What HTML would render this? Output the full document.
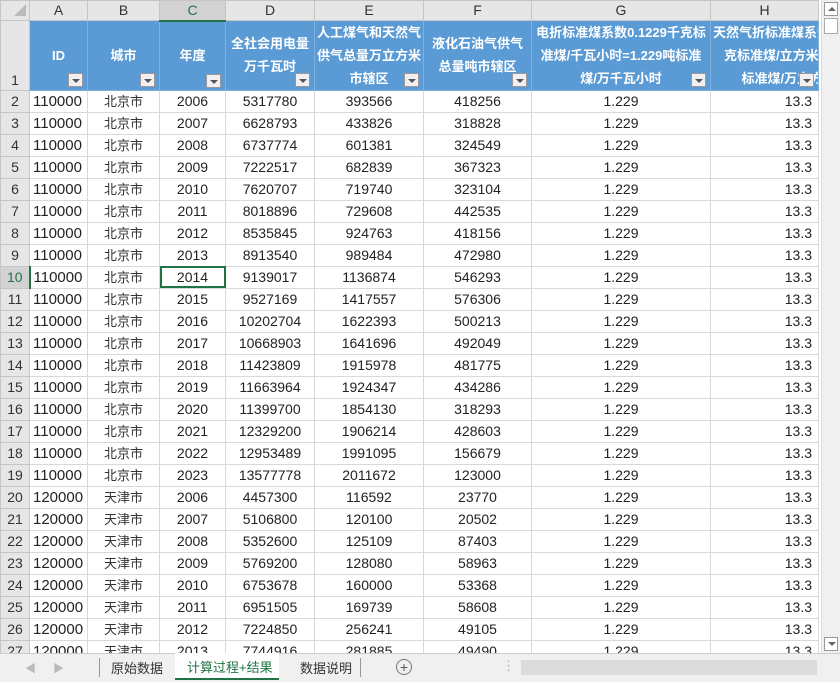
<!DOCTYPE html>
<html><head><meta charset="utf-8"><style>
body{margin:0;width:840px;height:681px;overflow:hidden;background:#fff;font-family:"Liberation Sans","Noto Sans CJK SC",sans-serif;}
#wrap{position:absolute;left:0;top:0;width:819px;height:653px;overflow:hidden;}
table{border-collapse:collapse;table-layout:fixed;width:818px;}
td{border:1px solid #d9d9d9;padding:0 2px;height:21px;font-size:14px;color:#222;white-space:nowrap;overflow:hidden;text-align:center;line-height:21px;}
tr.ch td{background:#e6e6e6;border-color:#c6c6c6;height:17px;line-height:17px;font-size:14px;color:#333;}
td.rh{background:#e6e6e6;border-color:#c6c6c6;text-align:center;font-size:14px;color:#333;padding:0;}
td.a{text-align:left;padding-left:3px;font-size:15px}
td.h{text-align:right;padding-right:6px}
.cn{font-size:13px;color:#333}
tr.hd td{height:68px;padding:0}
tr.hd td.x{background:#5b9bd5;color:#fff;font-weight:bold;font-size:13px;border-color:#7fb0de;}
.in{position:relative;height:68px;overflow:hidden;display:flex;align-items:center;justify-content:center;line-height:23px;white-space:normal;padding:0 2px;box-sizing:border-box}
.dd{position:absolute;right:4px;bottom:2px;width:15px;height:14px;background:#f0f0f0;border:1px solid #999;box-sizing:border-box}
.dd:after{content:"";position:absolute;left:3px;top:5px;border-left:4px solid transparent;border-right:4px solid transparent;border-top:4px solid #555}
#vs{position:absolute;left:821px;top:0;width:19px;height:653px;background:#f0f0f0;border-left:1px solid #ddd}
#tabs{position:absolute;left:0;top:653px;width:840px;height:28px;background:#f0f0f0;border-top:1px solid #ccc;font-size:13px;color:#333}
</style></head><body>
<div id="wrap"><table>
<colgroup><col style="width:29px"><col style="width:58px"><col style="width:72px"><col style="width:66px"><col style="width:89px"><col style="width:109px"><col style="width:108px"><col style="width:179px"><col style="width:108px"></colgroup>
<tr class="ch"><td style="background:#e6e6e6"><span style="display:inline-block;border-left:12px solid transparent;border-bottom:12px solid #bbb;margin-top:3px;margin-left:10px"></span></td><td>A</td><td>B</td><td style="background:#d2d2d2;border-bottom:2px solid #217346;color:#217346">C</td><td>D</td><td>E</td><td>F</td><td>G</td><td>H</td></tr>
<tr class="hd"><td class="rh" style="vertical-align:bottom;line-height:20px">1</td><td class="x"><div class="in">ID<span class="dd"></span></div></td><td class="x"><div class="in">城市<span class="dd"></span></div></td><td class="x"><div class="in">年度<span class="dd"></span></div></td><td class="x"><div class="in">全社会用电量万千瓦时<span class="dd"></span></div></td><td class="x"><div class="in">人工煤气和天然气供气总量万立方米市辖区<span class="dd"></span></div></td><td class="x"><div class="in">液化石油气供气总量吨市辖区<span class="dd"></span></div></td><td class="x"><div class="in">电折标准煤系数0.1229千克标准煤/千瓦小时=1.229吨标准煤/万千瓦小时<span class="dd"></span></div></td><td class="x"><div class="in" style="white-space:nowrap;justify-content:flex-start">天然气折标准煤系数<br>&nbsp;&nbsp;克标准煤/立方米=<br>&nbsp;&nbsp;&nbsp;&nbsp;&nbsp;&nbsp;标准煤/万立方<span class="dd"></span></div></td></tr>
<tr><td class="rh">2</td><td class="a">110000</td><td class="cn">北京市</td><td>2006</td><td>5317780</td><td>393566</td><td>418256</td><td>1.229</td><td class="h">13.3</td></tr>
<tr><td class="rh">3</td><td class="a">110000</td><td class="cn">北京市</td><td>2007</td><td>6628793</td><td>433826</td><td>318828</td><td>1.229</td><td class="h">13.3</td></tr>
<tr><td class="rh">4</td><td class="a">110000</td><td class="cn">北京市</td><td>2008</td><td>6737774</td><td>601381</td><td>324549</td><td>1.229</td><td class="h">13.3</td></tr>
<tr><td class="rh">5</td><td class="a">110000</td><td class="cn">北京市</td><td>2009</td><td>7222517</td><td>682839</td><td>367323</td><td>1.229</td><td class="h">13.3</td></tr>
<tr><td class="rh">6</td><td class="a">110000</td><td class="cn">北京市</td><td>2010</td><td>7620707</td><td>719740</td><td>323104</td><td>1.229</td><td class="h">13.3</td></tr>
<tr><td class="rh">7</td><td class="a">110000</td><td class="cn">北京市</td><td>2011</td><td>8018896</td><td>729608</td><td>442535</td><td>1.229</td><td class="h">13.3</td></tr>
<tr><td class="rh">8</td><td class="a">110000</td><td class="cn">北京市</td><td>2012</td><td>8535845</td><td>924763</td><td>418156</td><td>1.229</td><td class="h">13.3</td></tr>
<tr><td class="rh">9</td><td class="a">110000</td><td class="cn">北京市</td><td>2013</td><td>8913540</td><td>989484</td><td>472980</td><td>1.229</td><td class="h">13.3</td></tr>
<tr><td class="rh" style="background:#d2d2d2;color:#217346;border-right:2px solid #217346">10</td><td class="a">110000</td><td class="cn">北京市</td><td style="outline:2px solid #217346;outline-offset:-2px">2014</td><td>9139017</td><td>1136874</td><td>546293</td><td>1.229</td><td class="h">13.3</td></tr>
<tr><td class="rh">11</td><td class="a">110000</td><td class="cn">北京市</td><td>2015</td><td>9527169</td><td>1417557</td><td>576306</td><td>1.229</td><td class="h">13.3</td></tr>
<tr><td class="rh">12</td><td class="a">110000</td><td class="cn">北京市</td><td>2016</td><td>10202704</td><td>1622393</td><td>500213</td><td>1.229</td><td class="h">13.3</td></tr>
<tr><td class="rh">13</td><td class="a">110000</td><td class="cn">北京市</td><td>2017</td><td>10668903</td><td>1641696</td><td>492049</td><td>1.229</td><td class="h">13.3</td></tr>
<tr><td class="rh">14</td><td class="a">110000</td><td class="cn">北京市</td><td>2018</td><td>11423809</td><td>1915978</td><td>481775</td><td>1.229</td><td class="h">13.3</td></tr>
<tr><td class="rh">15</td><td class="a">110000</td><td class="cn">北京市</td><td>2019</td><td>11663964</td><td>1924347</td><td>434286</td><td>1.229</td><td class="h">13.3</td></tr>
<tr><td class="rh">16</td><td class="a">110000</td><td class="cn">北京市</td><td>2020</td><td>11399700</td><td>1854130</td><td>318293</td><td>1.229</td><td class="h">13.3</td></tr>
<tr><td class="rh">17</td><td class="a">110000</td><td class="cn">北京市</td><td>2021</td><td>12329200</td><td>1906214</td><td>428603</td><td>1.229</td><td class="h">13.3</td></tr>
<tr><td class="rh">18</td><td class="a">110000</td><td class="cn">北京市</td><td>2022</td><td>12953489</td><td>1991095</td><td>156679</td><td>1.229</td><td class="h">13.3</td></tr>
<tr><td class="rh">19</td><td class="a">110000</td><td class="cn">北京市</td><td>2023</td><td>13577778</td><td>2011672</td><td>123000</td><td>1.229</td><td class="h">13.3</td></tr>
<tr><td class="rh">20</td><td class="a">120000</td><td class="cn">天津市</td><td>2006</td><td>4457300</td><td>116592</td><td>23770</td><td>1.229</td><td class="h">13.3</td></tr>
<tr><td class="rh">21</td><td class="a">120000</td><td class="cn">天津市</td><td>2007</td><td>5106800</td><td>120100</td><td>20502</td><td>1.229</td><td class="h">13.3</td></tr>
<tr><td class="rh">22</td><td class="a">120000</td><td class="cn">天津市</td><td>2008</td><td>5352600</td><td>125109</td><td>87403</td><td>1.229</td><td class="h">13.3</td></tr>
<tr><td class="rh">23</td><td class="a">120000</td><td class="cn">天津市</td><td>2009</td><td>5769200</td><td>128080</td><td>58963</td><td>1.229</td><td class="h">13.3</td></tr>
<tr><td class="rh">24</td><td class="a">120000</td><td class="cn">天津市</td><td>2010</td><td>6753678</td><td>160000</td><td>53368</td><td>1.229</td><td class="h">13.3</td></tr>
<tr><td class="rh">25</td><td class="a">120000</td><td class="cn">天津市</td><td>2011</td><td>6951505</td><td>169739</td><td>58608</td><td>1.229</td><td class="h">13.3</td></tr>
<tr><td class="rh">26</td><td class="a">120000</td><td class="cn">天津市</td><td>2012</td><td>7224850</td><td>256241</td><td>49105</td><td>1.229</td><td class="h">13.3</td></tr>
<tr><td class="rh">27</td><td class="a">120000</td><td class="cn">天津市</td><td>2013</td><td>7744916</td><td>281885</td><td>49490</td><td>1.229</td><td class="h">13.3</td></tr>
</table></div>
<div id="vs">
<div style="position:absolute;left:2px;top:2px;width:14px;height:14px;border:1px solid #999;background:#fff;box-sizing:border-box"><span style="position:absolute;left:3px;top:4px;border-left:4px solid transparent;border-right:4px solid transparent;border-bottom:4px solid #666"></span></div>
<div style="position:absolute;left:2px;top:18px;width:14px;height:16px;border:1px solid #aaa;background:#fff;box-sizing:border-box"></div>
<div style="position:absolute;left:2px;top:637px;width:14px;height:14px;border:1px solid #999;background:#fff;box-sizing:border-box"><span style="position:absolute;left:3px;top:4px;border-left:4px solid transparent;border-right:4px solid transparent;border-top:4px solid #666"></span></div>
</div>
<div id="tabs">
<span style="position:absolute;left:25px;top:6px;color:#bbb;font-size:11px">◀</span>
<span style="position:absolute;left:53px;top:6px;color:#bbb;font-size:11px">▶</span>
<div style="position:absolute;left:99px;top:4px;width:1px;height:19px;background:#999"></div>
<span style="position:absolute;left:111px;top:4px">原始数据</span>
<div style="position:absolute;left:175px;top:-1px;width:104px;height:27px;background:#fff;border-bottom:2px solid #217346;box-sizing:border-box"><span style="position:absolute;left:12px;top:4px;color:#217346">计算过程+结果</span></div>
<span style="position:absolute;left:300px;top:4px">数据说明</span>
<div style="position:absolute;left:360px;top:4px;width:1px;height:19px;background:#999"></div>
<div style="position:absolute;left:396px;top:5px;width:14px;height:14px;border:1px solid #777;border-radius:50%;text-align:center;line-height:14px;font-size:14px;color:#555">+</div>
<span style="position:absolute;left:502px;top:4px;color:#aaa">⋮</span>
<div style="position:absolute;left:521px;top:6px;width:296px;height:15px;background:#dcdcdc"></div>
</div>
</body></html>
